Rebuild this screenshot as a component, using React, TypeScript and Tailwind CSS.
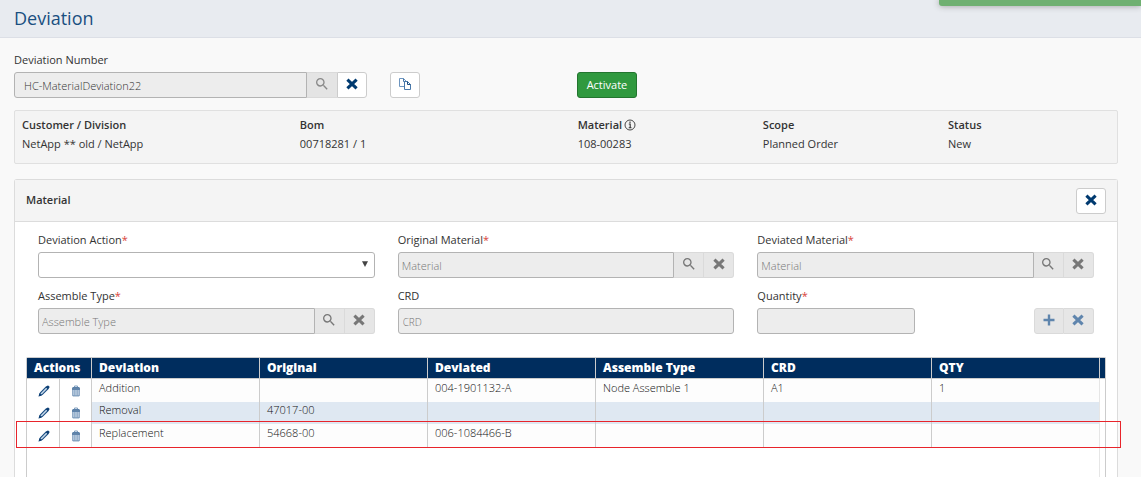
import type { InputHTMLAttributes, ReactNode } from "react";
import { MdSearch } from "react-icons/md";

function CrossIcon() {
  return (
    <svg viewBox="0 0 12 12" className="size-3" aria-hidden="true">
      <path d="M1.4 1.6 10.6 10.4M10.6 1.6 1.4 10.4" stroke="currentColor" strokeWidth="3.1" fill="none" />
    </svg>
  );
}

function PlusIcon() {
  return (
    <svg viewBox="0 0 12 12" className="size-3" aria-hidden="true">
      <path d="M6 .5v11M.5 6h11" stroke="currentColor" strokeWidth="2.4" fill="none" />
    </svg>
  );
}

function CopyIcon() {
  return (
    <svg viewBox="0 0 14 14" className="size-3.5" fill="none" strokeWidth="1" aria-hidden="true">
      <path d="M6 9.5H1.5v-8h4l2.5 2.5" stroke="#6d95bf" />
      <path d="M5.5 1.5v3h2.5" stroke="#4878aa" />
      <path d="M6.5 4.5h3l3 3v5h-6z" fill="#fff" stroke="#4878aa" />
      <path d="M9.5 4.5v3h3" stroke="#1d4f83" />
    </svg>
  );
}

function PencilIcon() {
  return (
    <svg viewBox="0 0 12 12" className="size-3" aria-hidden="true">
      <path d="M1.6 10.4 2.4 7.8 8.3 1.9l1.8 1.8L4.2 9.6z" fill="#c9dbec" stroke="#1d4f83" strokeWidth="1.1" />
      <path d="M.5 11.5 1.5 8.1 3.9 10.5z" fill="#0d3f75" />
      <path d="m7.8 2.2 1.5-1.5q.6-.5 1.2 0l.8.8q.5.6 0 1.2L9.8 4.2z" fill="#0d3f75" />
    </svg>
  );
}

function TrashIcon() {
  return (
    <svg viewBox="0 0 10 12" className="h-3 w-2.5" aria-hidden="true">
      <path d="M3.5 2V1h3v1" fill="none" stroke="#7d9cbd" strokeWidth="1" />
      <path d="M1.5 2.5h7" stroke="#5a80a9" strokeWidth="1" />
      <path d="M1 4h8" stroke="#1d4f83" strokeWidth="1.4" />
      <path d="M1.8 4.5h6.4v6.4H1.8z" fill="#d3e0ed" stroke="#5a80a9" strokeWidth=".9" />
      <path d="M3.9 5v5.5M6.1 5v5.5" stroke="#5a80a9" strokeWidth=".8" />
    </svg>
  );
}

function FieldLabel({ htmlFor, required, children }: { htmlFor: string; required?: boolean; children: ReactNode }) {
  return (
    <label htmlFor={htmlFor} className="block h-5 text-[11px] leading-4">
      {children}
      {required && <span className="text-[#d9433a]">*</span>}
    </label>
  );
}

function TextBox({ className = "", ...rest }: InputHTMLAttributes<HTMLInputElement>) {
  return (
    <input
      type="text"
      className={`h-[26px] min-w-0 border border-[#b3b3b3] bg-[#ededed] text-[11px] font-light placeholder:text-[#777] ${className}`}
      {...rest}
    />
  );
}

function LookupField({ id, label, placeholder }: { id: string; label: string; placeholder: string }) {
  return (
    <div>
      <FieldLabel htmlFor={id} required>
        {label}
      </FieldLabel>
      <div className="flex">
        <TextBox id={id} placeholder={placeholder} disabled className="flex-1 rounded-l-[3px] px-[3px]" />
        <button
          type="button"
          disabled
          aria-label={`Search ${label}`}
          className="flex h-[26px] w-[30px] items-center justify-center border-y border-r border-[#dadada] bg-[#e6e6e6] pb-0.5 text-[#777]"
        >
          <MdSearch className="size-4" />
        </button>
        <button
          type="button"
          disabled
          aria-label={`Clear ${label}`}
          className="flex h-[26px] w-[30px] items-center justify-center rounded-r-[3px] border-y border-r border-[#dadada] bg-[#e6e6e6] pb-0.5 text-[#777]"
        >
          <CrossIcon />
        </button>
      </div>
    </div>
  );
}

const summary: { name: string; value: string; info?: boolean }[] = [
  { name: "Customer / Division", value: "NetApp ** old / NetApp" },
  { name: "Bom", value: "00718281 / 1" },
  { name: "Material", value: "108-00283", info: true },
  { name: "Scope", value: "Planned Order" },
  { name: "Status", value: "New" },
];

const columns = ["Deviation", "Original", "Deviated", "Assemble Type", "CRD", "QTY"];

const rows = [
  ["Addition", "", "004-1901132-A", "Node Assemble 1", "A1", "1"],
  ["Removal", "47017-00", "", "", "", ""],
  ["Replacement", "54668-00", "006-1084466-B", "", "", ""],
];

export default function App() {
  return (
    <div className="relative flex min-h-screen flex-col bg-[#f9f9f9] font-['Open_Sans',sans-serif] text-[11px] text-[#333]">
      <div className="absolute top-0 right-0 h-1.5 w-[202px] rounded-bl-[3px] bg-[#6fb071] shadow-[0_0_6px_#999]" role="status" />
      <header className="h-[38px] border-b border-[#dcdfe6] bg-[#e8ebf0] px-3.5">
        <h1 className="text-lg leading-9 text-[#1a4f80]">Deviation</h1>
      </header>

      <main className="flex flex-1 flex-col pt-3.5 pr-[23px] pl-3.5">
        <div className="grid grid-cols-[60fr_59fr]">
          <div>
            <FieldLabel htmlFor="deviation-number">Deviation Number</FieldLabel>
            <div className="flex">
              <TextBox
                id="deviation-number"
                defaultValue="HC-MaterialDeviation22"
                readOnly
                className="w-[293px] rounded-l-[3px] px-[9px] text-[#333]"
              />
              <button
                type="button"
                disabled
                aria-label="Search deviation"
                className="flex h-[26px] w-[30px] items-center justify-center border-y border-[#dadada] bg-[#e4e4e4] pb-0.5 text-[#888]"
              >
                <MdSearch className="size-4" />
              </button>
              <button
                type="button"
                aria-label="Clear deviation"
                className="flex h-[26px] w-[30px] items-center justify-center rounded-r-[3px] border border-[#ccc] bg-white pb-0.5 text-[#003a70]"
              >
                <CrossIcon />
              </button>
              <button
                type="button"
                aria-label="Copy deviation"
                className="ml-[23px] flex h-[26px] w-[30px] items-center justify-center rounded-[3px] border border-[#ccc] bg-white pb-0.5"
              >
                <CopyIcon />
              </button>
            </div>
          </div>
          <div className="flex items-end pl-1.5">
            <button
              type="button"
              className="h-[26px] rounded-[3px] border border-[#23752f] bg-[#30993f] px-[9px] text-[11px] text-white"
            >
              Activate
            </button>
          </div>
        </div>

        <dl className="mt-3 grid h-[54px] grid-cols-[30fr_30fr_20fr_20fr_19fr] rounded-xs border border-[#e0e0e0] bg-[#f4f4f4] pt-1">
          {summary.map((item) => (
            <div key={item.name} className="pl-[7px] leading-[19px]">
              <dt className="flex items-center gap-0.5 font-semibold">
                {item.name}
                {item.info && (
                  <svg viewBox="0 0 12 12" className="size-3" fill="none" stroke="currentColor" aria-label="Info">
                    <circle cx="6" cy="6" r="5" strokeWidth=".9" />
                    <path d="M4.8 5h1.4v3.7M4.7 8.7h2.8M6 2.6v1.3" strokeWidth="1.1" />
                  </svg>
                )}
              </dt>
              <dd>{item.value}</dd>
            </div>
          ))}
        </dl>

        <section className="mt-[15px] flex flex-1 flex-col rounded-t-[3px] border border-b-0 border-[#dcdcdc] bg-white">
          <div className="flex h-[42px] items-center justify-between border-b border-[#dcdcdc] bg-[#f4f4f4] px-[11px]">
            <h2 className="font-semibold">Material</h2>
            <button
              type="button"
              aria-label="Close material"
              className="flex h-[26px] w-[30px] items-center justify-center rounded-[3px] border border-[#ccc] bg-white pb-0.5 text-[#003a70]"
            >
              <CrossIcon />
            </button>
          </div>

          <form className="grid grid-cols-3 gap-x-[23px] gap-y-2.5 px-[23px] pt-2.5">
            <div>
              <FieldLabel htmlFor="action" required>
                Deviation Action
              </FieldLabel>
              <div className="relative">
                <select id="action" className="block h-[26px] w-full appearance-none rounded-[3px] border border-[#b3b3b3] bg-white px-1">
                  <option value="" />
                  <option>Addition</option>
                  <option>Removal</option>
                  <option>Replacement</option>
                </select>
                <svg viewBox="0 0 6 6" className="pointer-events-none absolute top-[9px] right-[7px] size-1.5" aria-hidden="true">
                  <path d="M0 .3h6L3 6z" fill="#444" />
                </svg>
              </div>
            </div>
            <LookupField id="original" label="Original Material" placeholder="Material" />
            <LookupField id="deviated" label="Deviated Material" placeholder="Material" />
            <LookupField id="assemble" label="Assemble Type" placeholder="Assemble Type" />
            <div>
              <FieldLabel htmlFor="crd">CRD</FieldLabel>
              <TextBox id="crd" placeholder="CRD" disabled className="w-full rounded-[3px] px-1 placeholder:text-[10px]" />
            </div>
            <div className="flex items-end justify-between">
              <div>
                <FieldLabel htmlFor="quantity" required>
                  Quantity
                </FieldLabel>
                <TextBox id="quantity" disabled className="block w-[158px] rounded-[3px] px-1" />
              </div>
              <div className="flex">
                <button
                  type="button"
                  disabled
                  aria-label="Add row"
                  className="flex h-[26px] w-[30px] items-center justify-center rounded-l-[3px] border border-[#dadada] bg-[#e6e6e6] pb-0.5 text-[#5f85ad]"
                >
                  <PlusIcon />
                </button>
                <button
                  type="button"
                  disabled
                  aria-label="Reset fields"
                  className="flex h-[26px] w-[30px] items-center justify-center rounded-r-[3px] border-y border-r border-[#dadada] bg-[#e6e6e6] pb-0.5 text-[#5f85ad]"
                >
                  <CrossIcon />
                </button>
              </div>
            </div>
          </form>

          <div className="mx-[11px] mt-[23px] flex flex-1 flex-col rounded-t-xs border border-b-0 border-[#ccc]">
            <table className="w-full table-fixed border-separate border-spacing-0 text-left">
              <colgroup>
                <col className="w-[33px]" />
                <col className="w-8" />
                {columns.map((name) => (
                  <col key={name} />
                ))}
                <col className="w-[5px]" />
              </colgroup>
              <thead className="bg-[#002d5e] text-xs text-white">
                <tr className="h-[21px]">
                  <th colSpan={2} className="border-r border-b border-[#ccc] pl-[7px] pb-px leading-4 font-extrabold">
                    Actions
                  </th>
                  {columns.map((name) => (
                    <th key={name} className="border-r border-b border-[#ccc] pl-[7px] pb-px leading-4 font-extrabold">
                      {name}
                    </th>
                  ))}
                  <td className="border-b border-[#ccc]" />
                </tr>
              </thead>
              <tbody className="text-[#111]">
                {rows.map((row, index) => (
                  <tr key={row[0]} className={index === 1 ? "h-[22px] bg-[#dfe8f2]" : "relative h-[23px] bg-[#fdfdfd]"}>
                    <td className="border-r border-[#ccc] bg-white pl-px">
                      <button type="button" aria-label={`Edit ${row[0]}`} className="mx-auto block">
                        <PencilIcon />
                      </button>
                    </td>
                    <td className="border-r border-[#ccc] bg-white">
                      <button type="button" aria-label={`Delete ${row[0]}`} className="mx-auto block">
                        <TrashIcon />
                      </button>
                      {index === 2 && (
                        <span className="pointer-events-none absolute -top-[3px] -right-4 -bottom-px -left-[11px] border border-[#e8242b]" />
                      )}
                    </td>
                    {row.map((value, cell) => (
                      <td
                        key={columns[cell]}
                        className={`border-r pb-1.5 pl-[7px] leading-4 font-light ${cell === 5 ? "border-[#e6e6e6]" : "border-[#ccc]"}`}
                      >
                        {value}
                      </td>
                    ))}
                    <td className="bg-white" />
                  </tr>
                ))}
              </tbody>
            </table>
            <div className="mr-[5px] flex-1 border-r border-[#e6e6e6]" />
          </div>
        </section>
      </main>
    </div>
  );
}
